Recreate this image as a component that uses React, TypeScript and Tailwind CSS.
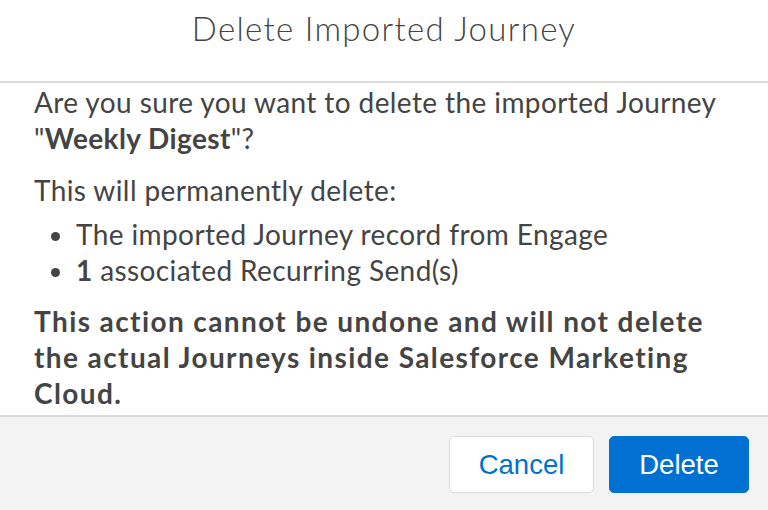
export default function App() {
  return (
    <div className="w-[768px] h-[510px] bg-white flex flex-col text-[#444444] font-['Lato',sans-serif] overflow-hidden">
      <header className="h-[83px] shrink-0 border-b-2 border-[#dddbda] flex justify-center">
        <h2 className="mt-[8px] text-[33px] leading-[40px] font-light tracking-[1.3px]">Delete Imported Journey</h2>
      </header>

      <div className="flex-1 px-[34px] pt-[1px] text-[28px] leading-[36px] tracking-[0.4px]">
        <p>
          Are you sure you want to delete the imported Journey "<b>Weekly Digest</b>"?
        </p>
        <p className="mt-4">This will permanently delete:</p>
        <ul className="mt-2 list-disc pl-[42px]">
          <li>The imported Journey record from Engage</li>
          <li>
            <b>1</b> associated Recurring Send(s)
          </li>
        </ul>
        <p className="mt-[15px] font-bold tracking-[1.4px]">
          This action cannot be undone and will not delete the actual Journeys inside Salesforce Marketing Cloud.
        </p>
      </div>

      <footer className="h-[95px] shrink-0 border-t-2 border-[#dddbda] bg-[#f3f3f3] flex justify-end items-start gap-[15px] pt-[19px] pr-[19px] font-['Liberation_Sans',Arial,sans-serif] text-[27.5px]">
        <button className="w-[145px] h-[57px] rounded-[5px] border border-[#dddbda] bg-white text-[#0070d2]">
          Cancel
        </button>
        <button className="w-[140px] h-[57px] rounded-[5px] border border-[#0070d2] bg-[#0070d2] text-white">
          Delete
        </button>
      </footer>
    </div>
  );
}
